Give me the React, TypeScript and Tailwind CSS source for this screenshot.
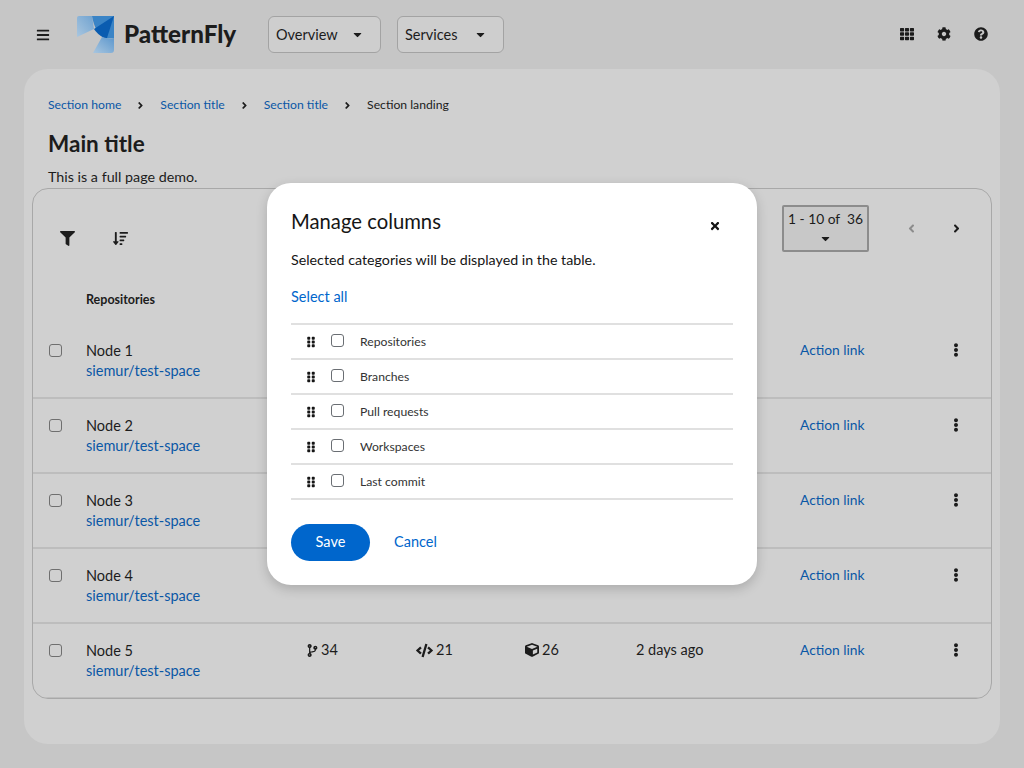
import { FaAngleLeft, FaAngleRight, FaBars, FaCaretDown, FaCode, FaCodeBranch, FaCog, FaCube, FaEllipsisV, FaFilter, FaGripVertical, FaQuestionCircle, FaSortAmountDown, FaTh, FaTimes } from "react-icons/fa";

const nodes = ["Node 1", "Node 2", "Node 3", "Node 4", "Node 5"];
const columns = ["Repositories", "Branches", "Pull requests", "Workspaces", "Last commit"];
const crumbs = ["Section home", "Section title", "Section title"];

function Logo() {
  return (
    <svg width="37" height="37" viewBox="0 0 37 37">
      <defs>
        <linearGradient id="light-left" x1="0" y1="1" x2="1" y2="0">
          <stop offset="0" stopColor="#a9c6df" />
          <stop offset="1" stopColor="#6fa2d0" />
        </linearGradient>
        <linearGradient id="light-bottom" x1="0" y1="1" x2="1" y2="0">
          <stop offset="0" stopColor="#a9c6df" />
          <stop offset="1" stopColor="#5c97cd" />
        </linearGradient>
      </defs>
      <path d="M2 0H15L17 13L0 21V2Q0 0 2 0Z" fill="url(#light-left)" />
      <path d="M15 0H37V22L27 21Q18 17 15 0Z" fill="#3a84c6" />
      <path d="M37 0L17 13Q20 18 27 22L37 22Z" fill="#0a5cb0" />
      <path d="M37 0V22L30 22Z" fill="#3a84c6" />
      <path d="M25 21Q31 23 37 22V34Q37 37 34 37H16Z" fill="url(#light-bottom)" />
    </svg>
  );
}

function Row({ name }: { name: string }) {
  return (
    <div className="grid h-[75px] grid-cols-[37px_220px_110px_109px_111px_164px_156px_1fr] border-b-2 border-[#bdbdbd] text-[14.5px] text-[#1c1c1c]">
      <div className="pl-4 pt-[20px]">
        <div className="h-[13px] w-[13px] rounded-[3px] border border-[#6f6f6f]" />
      </div>
      <div className="pl-4 pt-[16px] leading-[21px]">
        <div>{name}</div>
        <div className="-mt-[1px] text-[#0a57a6]">siemur/test-space</div>
      </div>
      <div className="flex h-[52px] items-center gap-[2px] pl-4">
        <FaCodeBranch className="text-[13px]" />
        <span>34</span>
      </div>
      <div className="flex h-[52px] items-center gap-[3px] pl-4">
        <FaCode className="text-[17px]" />
        <span>21</span>
      </div>
      <div className="flex h-[52px] items-center gap-[3px] pl-4">
        <FaCube className="text-[14px]" />
        <span>26</span>
      </div>
      <div className="flex h-[52px] items-center pl-4">2 days ago</div>
      <div className="flex h-[52px] items-center pl-4 text-[13.8px] text-[#0a57a6]">Action link</div>
      <div className="flex h-[52px] items-center pl-[9px]">
        <FaEllipsisV className="text-[14px]" />
      </div>
    </div>
  );
}

function Modal() {
  return (
    <div className="absolute left-[267px] top-[183px] h-[402px] w-[490px] rounded-[24px] bg-white px-6 pt-[25px] text-[#151515] shadow-[0_4px_12px_rgba(0,0,0,0.18)]">
      <div className="flex items-start justify-between">
        <h2 className="text-[20.25px] leading-[26px]">Manage columns</h2>
        <FaTimes className="mr-[12px] mt-[12px] text-[12px]" />
      </div>
      <p className="mt-[16px] text-[14.25px] leading-[20px]">Selected categories will be displayed in the table.</p>
      <button className="mt-[17px] block text-[14.5px] leading-[20px] text-[#0066cc]">Select all</button>
      <div className="mt-[16px] border-t-2 border-[#e0e0e0]">
        {columns.map((column) => (
          <div key={column} className="flex h-[35px] items-center border-b-2 border-[#e0e0e0] pl-[14px]">
            <FaGripVertical className="text-[12px] text-[#151515]" />
            <div className="ml-[14px] h-[13px] w-[13px] -translate-y-[1px] rounded-[3px] border border-[#6a6e73]" />
            <span className="ml-[16px] pt-[2px] text-[12.2px] text-[#333333]">{column}</span>
          </div>
        ))}
      </div>
      <div className="mt-[24px] flex items-center">
        <button className="h-[37px] w-[79px] rounded-full bg-[#0066cc] pb-[1px] text-[14.5px] text-white">Save</button>
        <button className="ml-[24px] pb-[1px] text-[14.5px] text-[#0066cc]">Cancel</button>
      </div>
    </div>
  );
}

export default function App() {
  return (
    <div className="relative h-[768px] w-[1024px] overflow-hidden bg-[#c6c6c6] font-['Lato','Liberation_Sans',sans-serif] text-[#1c1c1c]">
      <header className="flex h-[69px] items-center pb-[1px] pl-[36px] pr-[36px]">
        <FaBars className="mt-[2px] text-[14px]" />
        <div className="ml-[27px]"><Logo /></div>
        <span className="ml-[10px] w-[112px] whitespace-nowrap pt-[1px] text-[24.2px] font-black">PatternFly</span>
        <div className="ml-[32px] flex h-[37px] w-[113px] items-center justify-between rounded-[6px] border border-[#a3a3a3] bg-[#cecece] pl-[7px] pr-[16px] text-[14.5px]">
          <span className="pt-[2px]">Overview</span>
          <FaCaretDown className="text-[13px]" />
        </div>
        <div className="ml-[16px] flex h-[37px] w-[107px] items-center justify-between rounded-[6px] border border-[#a3a3a3] bg-[#cecece] pl-[7px] pr-[16px] text-[14.5px]">
          <span className="pt-[2px]">Services</span>
          <FaCaretDown className="text-[13px]" />
        </div>
        <div className="ml-auto flex items-center gap-[23px] text-[14px]">
          <FaTh />
          <FaCog />
          <FaQuestionCircle />
        </div>
      </header>
      <main className="mx-6 h-[675px] rounded-[24px] bg-[#d0d0d0] px-2 pt-[27px]">
        <nav className="flex items-center pl-4 text-[12.2px] leading-[18px]">
          {crumbs.map((crumb, index) => (
            <span key={index} className="flex items-center">
              <span className="text-[#0a57a6]">{crumb}</span>
              <FaAngleRight className="mx-[14px] text-[11px]" />
            </span>
          ))}
          <span>Section landing</span>
        </nav>
        <h1 className="mt-[15px] pl-4 text-[22.5px] font-bold leading-[30px]">Main title</h1>
        <p className="mt-[8px] pl-4 text-[14.3px] leading-[20px]">This is a full page demo.</p>
        <section className="mt-[1px] h-[511px] overflow-hidden rounded-[16px] border border-[#a8a8a8]">
          <div className="flex h-[90px] items-start">
            <FaFilter className="ml-[27px] mt-[42px] text-[15px]" />
            <FaSortAmountDown className="ml-[38px] mt-[42px] text-[15px]" />
            <div className="ml-auto mt-[16px] h-[47px] w-[87px] rounded-[2px] border-2 border-[#8c8c8c] bg-[#c8c8c8] pt-[2px] text-center text-[13.8px] leading-[20px]">
              <div>1 - 10 of&nbsp;&nbsp;36</div>
              <FaCaretDown className="mx-auto mt-[3px] text-[13px]" />
            </div>
            <FaAngleLeft className="ml-[36px] mt-[33px] text-[13px] text-[#8c8c8c]" />
            <FaAngleRight className="ml-[32px] mr-[28px] mt-[33px] text-[13px]" />
          </div>
          <div className="grid h-[45px] grid-cols-[37px_1fr] pt-[12px] text-[12.5px] font-bold leading-[18px]">
            <div />
            <div className="pl-4">Repositories</div>
          </div>
          {nodes.map((name) => (
            <Row key={name} name={name} />
          ))}
        </section>
      </main>
      <Modal />
    </div>
  );
}
